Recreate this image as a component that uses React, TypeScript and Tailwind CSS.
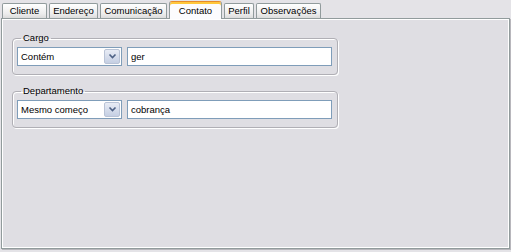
import React from "react";

const tabs = [
  { name: "Cliente", w: "w-[45px]" },
  { name: "Endereço", w: "w-[49px]" },
  { name: "Comunicação", w: "w-[67px]" },
  { name: "Contato", w: "w-[53px]" },
  { name: "Perfil", w: "w-[30px]" },
  { name: "Observações", w: "w-[65px]" },
];
const active = "Contato";

function Chevron() {
  return (
    <svg width="9" height="7" viewBox="0 0 9 7" aria-hidden>
      <path d="M1.5 1.5 L4.5 4.5 L7.5 1.5" fill="none" stroke="#4d6185" strokeWidth="1.6" />
    </svg>
  );
}

function Filter({ label, op, value }: { label: string; op: string; value: string }) {
  return (
    <fieldset className="ml-[10px] w-[326px] rounded-[4px] border border-[#b0afb5] px-[4px] pb-[8px] pt-[3px] shadow-[inset_1px_1px_0_#fff,1px_1px_0_#fff]">
      <legend className="ml-[4px] px-[2px] text-[9.5px] leading-[12px] text-black">{label}</legend>
      <div className="flex items-center gap-[5px]">
        <div className="flex h-[19px] w-[105px] items-center border border-[#7f9db9] bg-white">
          <span className="flex-1 pl-[3px] leading-none">{op}</span>
          <span className="mr-px flex h-[15px] w-[16px] items-center justify-center rounded-[2px] border border-[#b9c3d6] bg-[linear-gradient(#e8ecf5,#c5cfe3)]">
            <Chevron />
          </span>
        </div>
        <div className="flex h-[19px] w-[205px] items-center border border-[#7f9db9] bg-white pl-[3px] leading-none">
          {value}
        </div>
      </div>
    </fieldset>
  );
}

export default function App() {
  return (
    <div className="flex h-[252px] w-[511px] flex-col bg-[#e4e3e7] px-px pt-[2px] font-['Liberation_Sans',Arial,sans-serif] text-[9.5px] text-black">
      <div className="relative z-10 flex h-[16px] items-end gap-[2px] pl-[1px]">
        {tabs.map((t) =>
          t.name === active ? (
            <div
              key={t.name}
              className={`-mb-px flex h-[18px] ${t.w} items-center justify-center rounded-t-[3px] border border-b-0 border-[#919b9c] border-t-[#e68b2c] bg-[#fcfcfe] pt-px shadow-[inset_0_2px_0_#ffc83c]`}
            >
              {t.name}
            </div>
          ) : (
            <div
              key={t.name}
              className={`flex h-[15px] ${t.w} items-center justify-center rounded-t-[2px] border border-b-0 border-[#919b9c] bg-[linear-gradient(#ffffff,#ececec_70%,#dcdcdc)] pt-px`}
            >
              {t.name}
            </div>
          )
        )}
      </div>
      <div className="flex h-[231px] flex-col gap-[10px] border border-[#919b9c] bg-[#dfdee3] pt-[13px] shadow-[inset_1px_1px_0_#fff,inset_-1px_-1px_0_#fff,1px_1px_0_#b8b7bc]">
        <Filter label="Cargo" op="Contém" value="ger" />
        <Filter label="Departamento" op="Mesmo começo" value="cobrança" />
      </div>
    </div>
  );
}
